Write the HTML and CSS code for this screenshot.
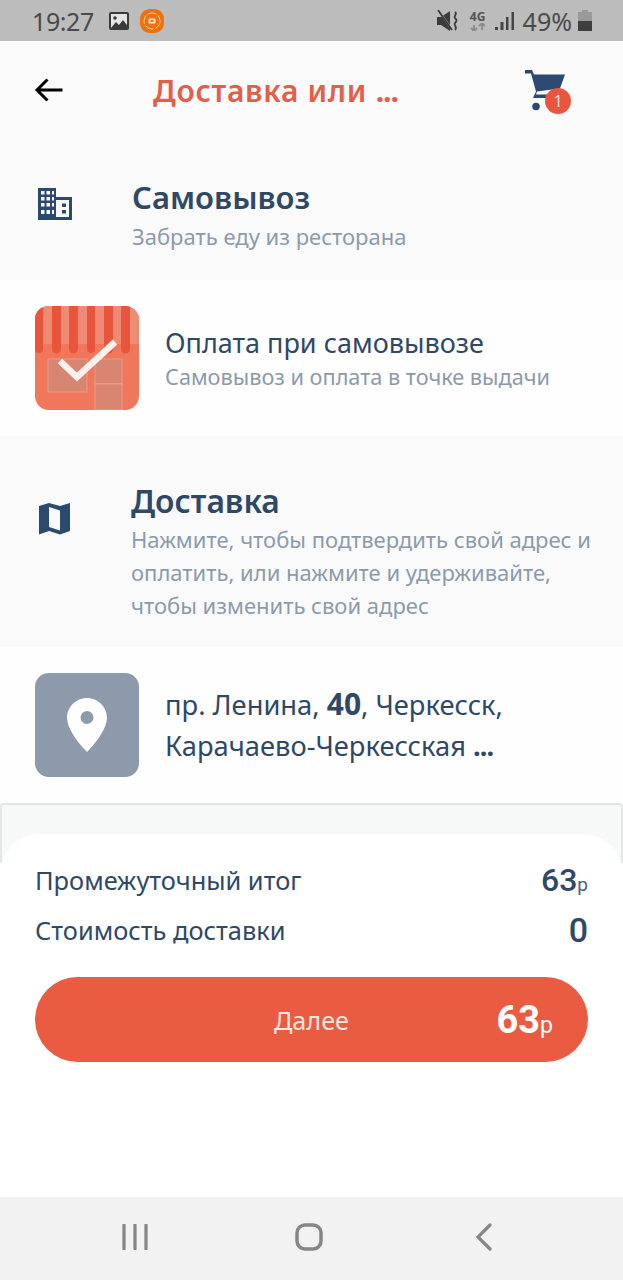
FILE: index.html
```html
<!DOCTYPE html>
<html lang="ru">
<head>
	<meta charset="UTF-8">
	<title>Доставка или самовывоз</title>
	<link rel="stylesheet" href="styles.css">
</head>
<body>
	<div class="statusbar">
		<div class="status-left">
			<span class="clock">19:27</span>
			<svg class="ic-gallery" width="20" height="18" viewBox="0 0 20 18">
				<rect width="20" height="18" rx="2" fill="#3a3a3a"/>
				<rect x="2" y="2" width="16" height="14" fill="#e4e4e4"/>
				<circle cx="6" cy="6" r="1.8" fill="#3a3a3a"/>
				<path d="M2 16l5-6 3 3 4-5 4 5v3z" fill="#3a3a3a"/>
			</svg>
			<svg class="ic-app" width="24" height="24" viewBox="0 0 24 24">
				<path d="M12 0c5 0 8 1 10 4s2 5 2 8 0 5-2 8-5 4-10 4-8-1-10-4-2-5-2-8 0-5 2-8 5-4 10-4z" fill="#f0700f"/>
				<circle cx="12" cy="12" r="8" fill="none" stroke="#fbd3b0" stroke-width="1" stroke-dasharray="9 2"/>
				<rect x="8.500" y="9.500" width="7" height="5" rx="1" fill="#fbe3cf"/>
				<rect x="10.500" y="11" width="3" height="2" fill="#f0700f"/>
			</svg>
		</div>
		<div class="status-right">
			<svg class="ic-mute" width="22" height="22" viewBox="0 0 22 22">
				<path d="M0 7h4l9-6v20l-9-6H0z" fill="#3a3a3a"/>
				<path d="M2 1l14 20" stroke="#bcbcbc" stroke-width="2"/>
				<path d="M1 0l14 20" stroke="#3a3a3a" stroke-width="1.800"/>
				<path d="M18 2c3 2-2 4 0 6s2 3 0 5 3 4 0 7" fill="none" stroke="#3a3a3a" stroke-width="1.800"/>
			</svg>
			<span class="net">
				<b>4G</b>
				<svg width="16" height="8" viewBox="0 0 16 8">
					<path d="M4 8V2M1 5l3 3 3-3M12 0v7M9 3l3-3 3 3" fill="none" stroke="#8a8a8a" stroke-width="1.800"/>
				</svg>
			</span>
			<svg class="ic-signal" width="20" height="20" viewBox="0 0 20 20">
				<rect x="0" y="16" width="3" height="3" fill="#444"/>
				<rect x="5.500" y="11" width="3" height="8" fill="#444"/>
				<rect x="11" y="6" width="2.500" height="13" fill="#444"/>
				<rect x="16.500" y="1" width="2.500" height="18" fill="#444"/>
			</svg>
			<span class="percent">49%</span>
			<svg class="ic-battery" width="14" height="21" viewBox="0 0 14 21">
				<rect x="4" y="0" width="6" height="2" fill="#999"/>
				<rect x="0" y="2" width="14" height="9" fill="#999"/>
				<rect x="0" y="11" width="14" height="10" fill="#3f3f3f"/>
			</svg>
		</div>
	</div>

	<div class="header">
		<svg class="back" width="30" height="26" viewBox="0 0 30 26">
			<path d="M28.500 13H3M13.500 2.500L3 13l10.500 10.500" fill="none" stroke="#000" stroke-width="3"/>
		</svg>
		<div class="title">Доставка или <span class="dots">...</span></div>
		<div class="cart">
			<svg width="44" height="44" viewBox="0 0 44 44">
				<path d="M2 2h7l2 4.500h31l-5 14-23 3-1 3h21v3.500H10l3-6.500L8 5.500H2z" fill="#2c4a70"/>
				<circle cx="13" cy="38.500" r="3.800" fill="#2c4a70"/>
			</svg>
			<span class="badge">1</span>
		</div>
	</div>

	<div class="section section-pick">
		<svg class="sec-icon" width="34" height="32" viewBox="0 0 34 32">
			<path fill="#2c4a70" d="M0 0h18v9h16v23H0z"/>
			<path fill="#fafafb" d="M3 3h3.500v3.500H3zm5.500 0H12v3.500H8.500zm5.500 0h2v3.500h-2zM3 9h3.500v3.500H3zm5.500 0H12v3.500H8.500zM14 9h2v3.500h-2zM3 15h3.500v3.500H3zm5.500 0H12v3.500H8.500zm5.500 0h2v3.500h-2zM3 22h3.500v4H3zm5.500 0H12v4H8.500zm5.500 0h2v4h-2z"/>
			<path fill="#fafafb" d="M18 12h13v17H18z"/>
			<path fill="#2c4a70" d="M24 15.500h4V19h-4zm0 6.500h4v3.500h-4z"/>
		</svg>
		<div class="sec-text">
			<h2>Самовывоз</h2>
			<p>Забрать еду из ресторана</p>
		</div>
	</div>

	<div class="card">
		<svg class="thumb" width="104" height="104" viewBox="0 0 104 104">
			<rect width="104" height="104" rx="14" fill="#f0775c"/>
			<rect x="13" y="53" width="39" height="33" fill="#d58570" stroke="#ef9a84"/>
			<rect x="60" y="53" width="27" height="25" fill="#d58570" stroke="#ef9a84"/>
			<rect x="60" y="78" width="27" height="26" fill="#d58570" stroke="#ef9a84"/>
			<path d="M14 0h76a14 14 0 0 1 14 14v24H0V14A14 14 0 0 1 14 0z" fill="#ee8b74"/>
			<path d="M0 14A14 14 0 0 1 8 1v42a4 4 0 0 1-8 0zM17 0h9v43a4.500 4.500 0 0 1-9 0zM34 0h9v43a4.500 4.500 0 0 1-9 0zM52 0h8v43a4 4 0 0 1-8 0zM69 0h9v43a4.500 4.500 0 0 1-9 0zM86 0h4a14 14 0 0 1 5 1v42a4.500 4.500 0 0 1-9 0z" fill="#e9553b"/>
			<path d="M25 55l17 16 38-35" fill="none" stroke="#fbf1ec" stroke-width="6.500"/>
		</svg>
		<div class="card-text">
			<div class="card-title">Оплата при самовывозе</div>
			<div class="card-sub">Самовывоз и оплата в точке выдачи</div>
		</div>
	</div>

	<div class="section section-ship">
		<svg class="sec-icon" width="32" height="32" viewBox="0 0 32 32">
			<path fill-rule="evenodd" fill="#2c4a70" d="M0 3l10-3 11 3 10-3v28l-10 3.500L10 28 0 31.500zM10 4v20l11 3.500v-20z"/>
		</svg>
		<div class="sec-text">
			<h2>Доставка</h2>
			<p>Нажмите, чтобы подтвердить свой адрес и оплатить, или нажмите и удерживайте, чтобы изменить свой адрес</p>
		</div>
	</div>

	<div class="card">
		<div class="thumb thumb-pin">
			<svg width="40" height="54" viewBox="0 0 40 54">
				<path fill-rule="evenodd" fill="#fff" d="M20 0c11 0 20 9 20 20 0 9-9 23-20 34C9 43 0 29 0 20 0 9 9 0 20 0zm0 13a6.500 6.500 0 1 0 0 13 6.500 6.500 0 0 0 0-13z"/>
			</svg>
		</div>
		<div class="addr">пр. Ленина, <b>40</b>, Черкесск,<br>Карачаево-Черкесская <span class="dots">...</span></div>
	</div>

	<div class="peek"></div>

	<div class="sheet">
		<div class="row">
			<span class="row-label">Промежуточный итог</span>
			<span class="price">63<small>р</small></span>
		</div>
		<div class="row">
			<span class="row-label">Стоимость доставки</span>
			<span class="price price-zero">0</span>
		</div>
		<div class="btn">
			<span class="btn-label">Далее</span>
			<span class="btn-price">63<small>р</small></span>
		</div>
	</div>

	<div class="navbar">
		<svg width="26" height="26" viewBox="0 0 26 26">
			<path d="M2 1v24M13 1v24M24 1v24" stroke="#868686" stroke-width="3.200" stroke-linecap="round"/>
		</svg>
		<svg class="nav-home" width="28" height="28" viewBox="0 0 28 28">
			<rect x="2" y="2" width="24" height="24" rx="8" fill="none" stroke="#868686" stroke-width="3.500"/>
		</svg>
		<svg width="18" height="28" viewBox="0 0 18 28">
			<path d="M15 2L3 14l12 12" fill="none" stroke="#868686" stroke-width="3.200" stroke-linecap="round"/>
		</svg>
	</div>
</body>
</html>
```

FILE: styles.css
```css
*{margin:0;padding:0;box-sizing:border-box;}
body{width:623px;height:1280px;overflow:hidden;background:#fff;font-family:"Noto Sans","Liberation Sans",sans-serif;display:flex;flex-direction:column;}
.dots{font-weight:700;letter-spacing:-1px;}

/* status bar */
.statusbar{height:41px;background:#bcbcbc;display:flex;justify-content:space-between;align-items:center;padding:0 31px 0 32px;color:#4a4a4a;flex:none;}
.status-left,.status-right{display:flex;align-items:center;}
.clock{font-size:25px;letter-spacing:-.4px;margin-right:15px;}
.ic-gallery{margin-right:11px;}
.ic-mute{margin-right:10px;}
.net{display:flex;flex-direction:column;align-items:center;width:18px;margin-right:8px;color:#555;}
.net b{font-size:12px;line-height:13px;}
.ic-signal{margin-right:8px;}
.percent{font-size:25px;margin-right:6px;}

/* header */
.header{height:104px;background:#fbfbfc;display:flex;align-items:center;padding:0 56px 6px 34px;flex:none;}
.back{flex:none;}
.title{flex:1;padding-left:89px;font-size:30px;font-weight:600;color:#e0604a;letter-spacing:.7px;}
.cart{position:relative;width:44px;height:44px;}
.badge{position:absolute;right:-4px;bottom:-2px;width:26px;height:26px;border-radius:50%;background:#e9553d;color:#fbdcd5;font-size:17px;text-align:center;line-height:26px;}

/* sections */
.section{display:flex;background:#fafafb;padding-left:38px;flex:none;}
.section-pick{height:135px;padding-top:30px;}
.section-ship{height:211px;padding-top:43px;}
.sec-icon{flex:none;margin-right:60px;}
.section-pick .sec-icon{margin-top:13px;}
.section-ship .sec-icon{margin-top:24px;margin-left:1px;margin-right:60px;}
.sec-text h2{font-size:31px;line-height:44px;font-weight:600;color:#2f4866;}
.section-ship .sec-text h2{font-size:31.8px;}
.sec-text p{font-size:22px;line-height:33px;color:#8c9aab;padding-right:24px;}
.section-pick .sec-text p{padding-top:1px;}
.section-ship .sec-text{flex:1;}

.card{height:156px;background:#fefefe;display:flex;align-items:center;padding-left:35px;flex:none;}
.thumb{flex:none;margin-right:26px;}
.thumb-pin{width:104px;height:104px;border-radius:14px;background:#8c9aab;display:flex;align-items:center;justify-content:center;}
.card-title{font-size:27px;line-height:40px;color:#2f4866;}
.card-sub{font-size:21.7px;line-height:27px;margin-bottom:4px;color:#8c9aab;}
.addr{font-size:27.3px;line-height:41px;color:#2f4866;}
.addr b{font-size:30px;line-height:30px;font-weight:700;}

.peek{height:60px;background:#f7f8f8;border:2px solid #e3e7ea;border-bottom:0;border-radius:4px 4px 0 0;flex:none;}

/* bottom sheet */
.sheet{height:363px;margin-top:-29px;background:#fff;border-radius:40px 40px 0 0;padding:21px 35px 0;flex:none;position:relative;}
.row{display:flex;justify-content:space-between;align-items:center;height:50px;}
.row-label{font-size:25.4px;color:#2f4866;}
.price{font-family:Roboto,"Liberation Sans",sans-serif;font-size:32px;font-weight:500;color:#2f4866;}
.price small{font-size:19px;font-weight:400;color:#4c6079;}
.price-zero{font-size:34px;}
.btn{height:85px;margin-top:22px;border-radius:43px;background:#ea5c42;display:flex;align-items:center;justify-content:flex-end;padding-right:35px;position:relative;color:#fff;}
.btn-label{position:absolute;left:239px;font-size:25.2px;color:#fbe6e0;}
.btn-price{font-family:Roboto,"Liberation Sans",sans-serif;font-size:38px;font-weight:700;}
.btn-price small{font-size:23px;font-weight:400;}

/* android nav */
.navbar{flex:1;background:#f2f2f2;display:flex;justify-content:space-between;align-items:center;padding:0 130px 4px 122px;}
.nav-home{margin-right:5px;}
```
